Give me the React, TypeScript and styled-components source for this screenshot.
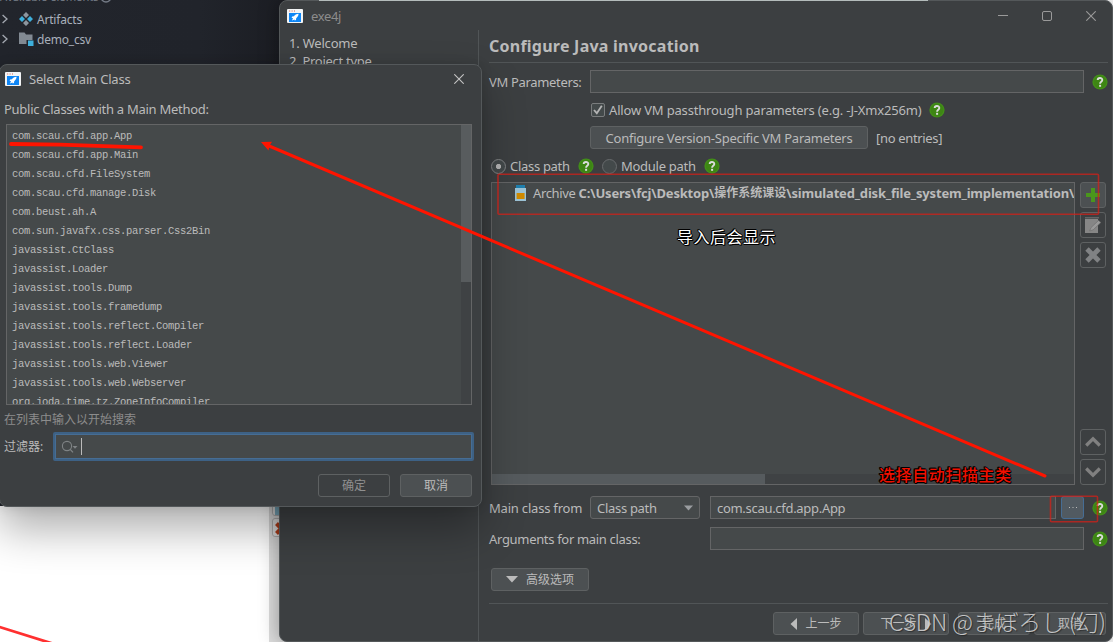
import React from "react";
import styled, { createGlobalStyle, css } from "styled-components";

const Global = createGlobalStyle`
  * { box-sizing: border-box; }
  html, body { margin: 0; padding: 0; }
  body {
    width: 1113px; height: 642px; overflow: hidden; background: #fff;
    font-family: "Noto Sans", "Noto Sans CJK SC", sans-serif;
    font-size: 13px; color: #bbb;
  }
`;

const Desktop = styled.div`
  position: relative;
  width: 1113px;
  height: 642px;
  overflow: hidden;
  background: #fff;
`;

/* ---------- windows ---------- */
const Win = styled.section<{ $x: number; $y: number; $w: number; $h: number }>`
  position: absolute;
  left: ${(p) => p.$x}px;
  top: ${(p) => p.$y}px;
  width: ${(p) => p.$w}px;
  height: ${(p) => p.$h}px;
  display: flex;
  flex-direction: column;
  background: #3c3f41;
  border: 1px solid #54585a;
  border-radius: 8px;
`;
const WizardWin = styled(Win)`
  box-shadow: 0 0 20px rgba(0, 0, 0, 0.35);
`;
const DialogWin = styled(Win)`
  box-shadow: 0 22px 44px rgba(0, 0, 0, 0.32), 0 0 12px rgba(0, 0, 0, 0.12);
`;

const TitleBar = styled.header<{ $h: number; $pad: string }>`
  display: flex;
  align-items: center;
  height: ${(p) => p.$h}px;
  padding: ${(p) => p.$pad};
  flex: none;
`;

const Label = styled.span<{ $c?: string; $s?: number; $ls?: number; $b?: boolean }>`
  color: ${(p) => p.$c ?? "#bbbbbb"};
  font-size: ${(p) => p.$s ?? 13}px;
  letter-spacing: ${(p) => p.$ls ?? 0}px;
  font-weight: ${(p) => (p.$b ? 700 : 400)};
  line-height: 18px;
  white-space: pre;
`;

const Spacer = styled.span<{ $w?: number }>`
  ${(p) => (p.$w === undefined ? css`flex: 1;` : css`flex: none; width: ${p.$w}px;`)}
`;

/* ---------- project tree ---------- */
const Tree = styled.aside`
  width: 300px;
  height: 506px;
  overflow: hidden;
  background: linear-gradient(90deg, #22252c 0, #21242b 200px, #1c1e24 279px);
`;
const TreeHead = styled.div`
  height: 9px;
  overflow: hidden;
  color: #747b86;
  font-size: 11.2px;
`;
const TreeHeadInner = styled.div`
  display: flex;
  align-items: center;
  gap: 1px;
  height: 16px;
  margin-top: -12px;
  white-space: pre;
`;
const TreeRow = styled.div`
  display: flex;
  align-items: center;
  height: 20px;
  color: #a9b0bb;
  font-size: 12px;
  letter-spacing: -0.2px;
`;

/* ---------- editor strip beneath the windows ---------- */
const Strip = styled.div`
  position: absolute;
  left: 269px;
  top: 500px;
  width: 30px;
  height: 142px;
  padding: 0 0 0 3px;
  display: flex;
  flex-direction: column;
  gap: 2px;
  background: #dcdcdc;
`;
const StripButton = styled.div<{ $h: number }>`
  width: 22px;
  height: ${(p) => p.$h}px;
  padding: 2px;
  border: 1px solid #b4b4b4;
  border-radius: 3px;
  background: #e6e6e6;
  flex: none;
  overflow: hidden;
`;
const TopEdge = styled.div`
  position: absolute;
  left: 319px;
  top: 0;
  width: 609px;
  height: 1px;
  background: #b4bcbb;
`;

/* ---------- wizard ---------- */
const Body = styled.div`
  flex: 1;
  display: flex;
  min-height: 0;
`;
const Steps = styled.nav`
  width: 199px;
  border-right: 1px solid #515557;
  padding: 4px 0 0 9px;
  display: flex;
  flex-direction: column;
`;
const Page = styled.main`
  flex: 1;
  display: flex;
  flex-direction: column;
  padding-left: 10px;
`;
const Row = styled.div<{ $h: number; $mt?: number; $pl?: number }>`
  display: flex;
  align-items: center;
  flex: none;
  height: ${(p) => p.$h}px;
  margin-top: ${(p) => p.$mt ?? 0}px;
  padding-left: ${(p) => p.$pl ?? 0}px;
`;
const Cell = styled.div<{ $w: number }>`
  width: ${(p) => p.$w}px;
  flex: none;
  display: flex;
`;
const Rule = styled.hr<{ $mt?: number }>`
  width: 619px;
  height: 1px;
  margin: ${(p) => p.$mt ?? 0}px 0 0;
  border: 0;
  background: #515557;
  flex: none;
`;
const Field = styled.div<{ $w: number }>`
  width: ${(p) => p.$w}px;
  height: 23px;
  flex: none;
  display: flex;
  align-items: center;
  padding: 0 7px 0 6px;
  background: #45494a;
  border: 1px solid #646566;
`;
const Button = styled.button<{ $w: number; $off?: boolean }>`
  width: ${(p) => p.$w}px;
  height: 23px;
  flex: none;
  display: flex;
  align-items: center;
  justify-content: center;
  gap: 8px;
  padding: 0;
  font-family: inherit;
  border: 1px solid #5e6162;
  border-radius: 3px;
  background: ${(p) => (p.$off ? "#3c3f41" : "#4c5052")};
`;
const Combo = styled(Button)`
  justify-content: space-between;
  padding: 0 6px;
  background: #45494a;
  border-color: #646566;
`;
const Browse = styled(Button)`
  background: #515a61;
  border-color: #466d94;
`;
const Check = styled.span`
  width: 14px;
  height: 14px;
  display: flex;
  align-items: center;
  justify-content: center;
  border: 1px solid #7a7d7e;
  border-radius: 2px;
  background: #43494a;
  flex: none;
`;
const Radio = styled.span<{ $on?: boolean }>`
  width: 15px;
  height: 15px;
  border-radius: 50%;
  border: 1px solid ${(p) => (p.$on ? "#808384" : "#686b6d")};
  flex: none;
  background: ${(p) =>
    p.$on ? "radial-gradient(circle, #b4b4b4 0 2.2px, #43494a 3px)" : "#43494a"};
`;
const PathArea = styled.div`
  display: flex;
  gap: 5px;
  height: 303px;
  margin: 8px 0 0 2px;
  flex: none;
`;
const PathList = styled.div`
  width: 584px;
  display: flex;
  flex-direction: column;
  justify-content: space-between;
  background: #45494a;
  border: 1px solid #646566;
  overflow: hidden;
`;
const PathEntry = styled.div`
  display: flex;
  align-items: center;
  height: 19px;
  padding-left: 22px;
  width: 582px;
  overflow: hidden;
`;
const HTrack = styled.div`
  height: 10px;
  background: #3f4244;
`;
const HThumb = styled.div`
  width: 273px;
  height: 10px;
  background: #565b5e;
`;
const Tools = styled.div`
  display: flex;
  flex-direction: column;
  gap: 4px;
`;
const Tool = styled.button<{ $off?: boolean }>`
  width: 26px;
  height: 26px;
  padding: 0;
  display: flex;
  align-items: center;
  justify-content: center;
  border: 1px solid #5e6162;
  border-radius: 3px;
  background: ${(p) => (p.$off ? "#3c3f41" : "#4c5052")};
`;
const Footer = styled.div`
  display: flex;
  margin-top: 8px;
  padding-left: 284px;
`;

/* ---------- dialog ---------- */
const ClassList = styled.div`
  display: flex;
  width: 466px;
  height: 281px;
  margin: 6px 0 0 6px;
  flex: none;
  background: #45494a;
  border: 1px solid #646566;
  overflow: hidden;
`;
const Classes = styled.ul`
  flex: 1;
  list-style: none;
  margin: 0;
  padding: 2px 0 0 5px;
`;
const ClassItem = styled.li`
  height: 19px;
  line-height: 19px;
  font-family: "Liberation Mono", monospace;
  font-size: 10.5px;
  letter-spacing: -0.3px;
  color: #bbb;
  white-space: pre;
`;
const VTrack = styled.div`
  width: 10px;
  background: #3f4244;
`;
const VThumb = styled.div`
  height: 157px;
  background: #585c5e;
`;
const Filter = styled.div`
  width: 421px;
  height: 29px;
  display: flex;
  align-items: center;
  padding-left: 6px;
  border: 2px solid #3d6185;
  box-shadow: inset 0 0 0 1px #466d94;
  border-radius: 2px;
  background: #45494a;
`;
const Caret = styled.span`
  width: 1px;
  height: 17px;
  margin-left: 3px;
  background: #bbb;
`;

/* ---------- annotations ---------- */
const Marks = styled.svg`
  position: absolute;
  inset: 0;
  pointer-events: none;
`;
const Note = styled.div<{ $x: number; $y: number; $c: string; $ls: number; $b?: boolean }>`
  position: absolute;
  left: ${(p) => p.$x}px;
  top: ${(p) => p.$y}px;
  font: ${(p) => (p.$b ? 500 : 400)} 16px/22px "Noto Sans CJK SC", sans-serif;
  letter-spacing: ${(p) => p.$ls}px;
  color: ${(p) => p.$c};
  white-space: pre;
  text-shadow: 1px 0 #000, -1px 0 #000, 0 1px #000, 0 -1px #000, 1px 1px #000, -1px -1px #000;
`;
const Watermark = styled.div`
  position: absolute;
  left: 889px;
  top: 604px;
  font: 300 23px/34px "Noto Sans CJK JP", sans-serif;
  letter-spacing: -0.2px;
  color: rgba(214, 214, 214, 0.88);
  white-space: pre;
  text-shadow: 1px 1px 1px rgba(0, 0, 0, 0.4);
`;

const AppIcon = () => (
  <svg width="16" height="14" viewBox="0 0 16 14">
    <rect width="16" height="14" rx="1" fill="#f2f4f5" />
    <rect x="2" y="4" width="12" height="9" fill="#0f86f5" />
    <path d="M2.2 2h1M4.6 2h1M7 2h1" stroke="#d9634f" strokeWidth="1" />
    <path d="M11.6 4.8 C9.4 5 7.8 6 7 7.3 L5.2 7.6 4.6 9 6 9 5 11.6 7.6 10.4 7.7 11.6 9 11 9.2 9.2 C10.6 8.3 11.4 6.8 11.6 4.8Z" fill="#fff" />
  </svg>
);

const Help = () => (
  <svg width="16" height="16" viewBox="0 0 16 16">
    <circle cx="8" cy="8" r="7.6" fill="#43901a" />
    <circle cx="8" cy="8" r="6.4" fill="#3e8614" />
    <path d="M5.7 6.1 C5.7 3.4 10.3 3.4 10.3 6 C10.3 7.8 8.1 7.8 8.1 9.7" fill="none" stroke="#dcdcdc" strokeWidth="1.9" />
    <rect x="7.1" y="10.8" width="2" height="2" fill="#dcdcdc" />
  </svg>
);

const Cross = ({ c, s = 10 }: { c: string; s?: number }) => (
  <svg width={s} height={s} viewBox="0 0 10 10">
    <path d="M0.3 0.3 9.7 9.7M9.7 0.3 0.3 9.7" stroke={c} strokeWidth="1.1" />
  </svg>
);

const Chevron = () => (
  <svg width="8" height="10" viewBox="0 0 8 10">
    <path d="M2.6 1 7 5 2.6 9" fill="none" stroke="#a4a9b1" strokeWidth="1.3" />
  </svg>
);

const classes = [
  "com.scau.cfd.app.App",
  "com.scau.cfd.app.Main",
  "com.scau.cfd.FileSystem",
  "com.scau.cfd.manage.Disk",
  "com.beust.ah.A",
  "com.sun.javafx.css.parser.Css2Bin",
  "javassist.CtClass",
  "javassist.Loader",
  "javassist.tools.Dump",
  "javassist.tools.framedump",
  "javassist.tools.reflect.Compiler",
  "javassist.tools.reflect.Loader",
  "javassist.tools.web.Viewer",
  "javassist.tools.web.Webserver",
  "org.joda.time.tz.ZoneInfoCompiler",
];

const ProjectTree = () => (
  <Tree>
    <TreeHead>
      <TreeHeadInner>
        Available elements
        <svg width="12" height="14" viewBox="0 0 12 14">
          <circle cx="6" cy="8" r="5" fill="none" stroke="#747b86" strokeWidth="1.3" />
        </svg>
      </TreeHeadInner>
    </TreeHead>
    <TreeRow>
      <Chevron />
      <Spacer $w={11} />
      <svg width="14" height="14" viewBox="0 0 14 14">
        <path d="M7 0 10 3 7 6 4 3Z M7 8 10 11 7 14 4 11Z" fill="#8d969f" />
        <path d="M3 4 6 7 3 10 0 7Z M11 4 14 7 11 10 8 7Z" fill="#3fb0dc" />
      </svg>
      <Spacer $w={4} />
      Artifacts
    </TreeRow>
    <TreeRow>
      <Chevron />
      <Spacer $w={10} />
      <svg width="16" height="14" viewBox="0 0 16 14">
        <path d="M1 0.5h5.5l1.5 2h6.5v5.5h-6v4H1z" fill="#828a93" />
        <rect x="10" y="8.5" width="5.5" height="5.5" fill="#3fb0dc" />
      </svg>
      <Spacer $w={3} />
      demo_csv
    </TreeRow>
  </Tree>
);

const Wizard = () => (
  <WizardWin $x={279} $y={0} $w={834} $h={642}>
    <TitleBar $h={29} $pad="0 16px 0 7px">
      <AppIcon />
      <Spacer $w={8} />
      <Label $c="#8c8c8c" $ls={-0.35}>exe4j</Label>
      <Spacer />
      <svg width="10" height="10" viewBox="0 0 10 10"><path d="M0 4.5H10" stroke="#9a9a9a" /></svg>
      <Spacer $w={34} />
      <svg width="10" height="10" viewBox="0 0 10 10">
        <rect x="0.5" y="0.5" width="9" height="9" rx="1.5" fill="none" stroke="#9a9a9a" />
      </svg>
      <Spacer $w={34} />
      <Cross c="#9a9a9a" />
    </TitleBar>
    <Body>
      <Steps>
        <Label $ls={-0.2}>1. Welcome</Label>
        <Label $ls={-0.28}>2. Project type</Label>
      </Steps>
      <Page>
        <Row $h={32}><Label $s={16} $ls={0.24} $b>Configure Java invocation</Label></Row>
        <Rule />
        <Row $h={23} $mt={7}>
          <Cell $w={101}><Label $ls={-0.33}>VM Parameters:</Label></Cell>
          <Field $w={494} />
          <Spacer $w={8} />
          <Help />
        </Row>
        <Row $h={16} $mt={9} $pl={102}>
          <Check>
            <svg width="12" height="12" viewBox="0 0 12 12">
              <path d="M2 6 4.8 9.2 9.8 1.8" fill="none" stroke="#b4b4b4" strokeWidth="1.8" />
            </svg>
          </Check>
          <Spacer $w={4} />
          <Cell $w={320}><Label $ls={-0.17}>Allow VM passthrough parameters (e.g. -J-Xmx256m)</Label></Cell>
          <Help />
        </Row>
        <Row $h={23} $mt={8} $pl={101}>
          <Button $w={278}><Label $ls={-0.25}>Configure Version-Specific VM Parameters</Label></Button>
          <Spacer $w={8} />
          <Label $ls={-0.33}>[no entries]</Label>
        </Row>
        <Row $h={16} $mt={9} $pl={2}>
          <Radio $on />
          <Spacer $w={4} />
          <Cell $w={68}><Label $ls={-0.3}>Class path</Label></Cell>
          <Help />
          <Spacer $w={8} />
          <Radio />
          <Spacer $w={4} />
          <Cell $w={83}><Label $ls={-0.27}>Module path</Label></Cell>
          <Help />
        </Row>
        <PathArea>
          <PathList>
            <PathEntry>
              <Cell $w={14}>
                <svg width="14" height="16" viewBox="0 0 14 16">
                  <path d="M2 0h9v3H2z" fill="#1f7fae" />
                  <path d="M1 3h11v13H1z" fill="#9cc3d6" />
                  <path d="M2.6 8h8v6h-8z" fill="#d08b00" />
                </svg>
              </Cell>
              <Spacer $w={5} />
              <Label $ls={-0.35}>Archive </Label>
              <Label $ls={-0.18} $b>C:\Users\fcj\Desktop\</Label>
              <Label $s={12} $b>操作系统课设</Label>
              <Label $ls={-0.18} $b>\simulated_disk_file_system_implementation\o</Label>
            </PathEntry>
            <HTrack><HThumb /></HTrack>
          </PathList>
          <Tools>
            <Tool>
              <svg width="14" height="14" viewBox="0 0 14 14">
                <path d="M5 0h4v5h5v4H9v5H5V9H0V5h5z" fill="#4a961c" />
              </svg>
            </Tool>
            <Tool $off>
              <svg width="16" height="16" viewBox="0 0 16 16">
                <path d="M0 2h13v14H0z" fill="#868686" />
                <path d="M0.5 0.8h13" stroke="#8b8b8b" strokeWidth="1.4" strokeDasharray="1 1" />
                <path d="M4.6 14 6 10.6 13.6 3.4 15.8 5.6 8.2 12.8Z" fill="#999" stroke="#6f6f6f" strokeWidth="0.7" />
              </svg>
            </Tool>
            <Tool $off>
              <svg width="16" height="16" viewBox="0 0 16 16">
                <path d="M2 2 14 14M14 2 2 14" stroke="#808284" strokeWidth="4.8" />
              </svg>
            </Tool>
            <Spacer />
            <Tool $off>
              <svg width="16" height="16" viewBox="0 0 16 16">
                <path d="M1.2 11.5 8 4.8 14.8 11.5" fill="none" stroke="#808080" strokeWidth="3.2" />
              </svg>
            </Tool>
            <Tool $off>
              <svg width="16" height="16" viewBox="0 0 16 16">
                <path d="M1.2 4.5 8 11.2 14.8 4.5" fill="none" stroke="#808080" strokeWidth="3.2" />
              </svg>
            </Tool>
          </Tools>
        </PathArea>
        <Row $h={23} $mt={11}>
          <Cell $w={101}><Label $ls={-0.2}>Main class from</Label></Cell>
          <Combo $w={110}>
            <Label $ls={-0.3}>Class path</Label>
            <svg width="9" height="6" viewBox="0 0 9 6"><path d="M0 0.5h9L4.5 5.5z" fill="#9a9da0" /></svg>
          </Combo>
          <Spacer $w={10} />
          <Field $w={346}><Label $ls={-0.3}>com.scau.cfd.app.App</Label></Field>
          <Spacer $w={5} />
          <Browse $w={23}>
            <svg width="8" height="2" viewBox="0 0 8 2"><path d="M0 0.5h1M3.5 0.5h1M7 0.5h1" stroke="#bbb" /></svg>
          </Browse>
          <Spacer $w={8} />
          <Help />
        </Row>
        <Row $h={23} $mt={8}>
          <Cell $w={221}><Label $ls={-0.32}>Arguments for main class:</Label></Cell>
          <Field $w={374} />
          <Spacer $w={8} />
          <Help />
        </Row>
        <Row $h={23} $mt={18} $pl={2}>
          <Button $w={98}>
            <svg width="12" height="7" viewBox="0 0 12 7"><path d="M0 0h12L6 6.5z" fill="#bbb" /></svg>
            <Label $s={12}>高级选项</Label>
          </Button>
        </Row>
        <Rule $mt={12} />
        <Footer>
          <Button $w={86}>
            <svg width="7" height="12" viewBox="0 0 7 12"><path d="M7 0v12L0.5 6z" fill="#bbb" /></svg>
            <Label $s={12}>上一步</Label>
          </Button>
          <Spacer $w={4} />
          <Button $w={86}>
            <Label $s={12}>下一步</Label>
            <svg width="7" height="12" viewBox="0 0 7 12"><path d="M0 0v12L6.5 6z" fill="#bbb" /></svg>
          </Button>
          <Spacer $w={9} />
          <Button $w={72}><Label $s={12}>完成</Label></Button>
          <Spacer $w={4} />
          <Button $w={72}><Label $s={12}>取消</Label></Button>
        </Footer>
      </Page>
    </Body>
  </WizardWin>
);

const ClassDialog = () => (
  <DialogWin $x={-1} $y={64} $w={483} $h={443}>
    <TitleBar $h={28} $pad="0 17px 0 5px">
      <AppIcon />
      <Spacer $w={8} />
      <Label $ls={-0.18}>Select Main Class</Label>
      <Spacer />
      <Cross c="#c4c4c4" s={10} />
    </TitleBar>
    <Row $h={18} $mt={7} $pl={4}><Label $ls={-0.27}>Public Classes with a Main Method:</Label></Row>
    <ClassList>
      <Classes>
        {classes.map((c) => <ClassItem key={c}>{c}</ClassItem>)}
      </Classes>
      <VTrack><VThumb /></VTrack>
    </ClassList>
    <Row $h={18} $mt={6} $pl={4}><Label $s={12} $c="#8c8c8c">在列表中输入以开始搜索</Label></Row>
    <Row $h={29} $mt={3} $pl={4}>
      <Cell $w={49}><Label $s={12}>过滤器:</Label></Cell>
      <Filter>
        <svg width="17" height="14" viewBox="0 0 17 14">
          <circle cx="6" cy="6" r="4.6" fill="none" stroke="#7f8385" strokeWidth="1.1" />
          <path d="M9.2 9.4 12 12.4" stroke="#7f8385" strokeWidth="1.3" />
          <path d="M11.5 6h5L14 8.8z" fill="#7f8385" />
        </svg>
        <Caret />
      </Filter>
    </Row>
    <Row $h={23} $mt={13} $pl={318}>
      <Button $w={72} $off><Label $s={12} $c="#909090">确定</Label></Button>
      <Spacer $w={10} />
      <Button $w={72}><Label $s={12}>取消</Label></Button>
    </Row>
  </DialogWin>
);

export default function App() {
  return (
    <>
      <Global />
      <Desktop>
        <ProjectTree />
        <Strip>
          <StripButton $h={16}>
            <svg width="16" height="12" viewBox="0 0 16 12"><rect width="16" height="12" fill="#7fb0c4" /></svg>
          </StripButton>
          <StripButton $h={19}>
            <svg width="14" height="13" viewBox="0 0 14 13">
              <path d="M1.5 1.5 11 11.5M11 1.5 1.5 11.5" stroke="#b8401c" strokeWidth="4" />
            </svg>
          </StripButton>
        </Strip>
        <Wizard />
        <TopEdge />
        <ClassDialog />
        <Marks width="1113" height="642" viewBox="0 0 1113 642">
          <g fill="none" stroke="#d81e16" strokeOpacity="0.72" strokeWidth="1.6">
            <rect x="498" y="174.3" width="600.5" height="40" rx="1" />
            <rect x="1050.5" y="496.3" width="47" height="25.5" rx="1" />
          </g>
          <g fill="none" stroke="#ff1400" strokeLinecap="round">
            <path d="M1045 476 268 145.5" strokeWidth="3" />
            <path d="M11 144 60 144.6 141 147.3" strokeWidth="3.8" />
            <path d="M-2 626.5 54 644" stroke="#ff3030" strokeWidth="2.8" />
          </g>
          <path d="M261 142 272 141.8 269.5 145.8 268.5 150.5Z" fill="#ff1400" />
        </Marks>
        <Note $x={677} $y={225} $c="#fff" $ls={0.5}>导入后会显示</Note>
        <Note $x={879} $y={463} $c="#f01000" $ls={0.6} $b>选择自动扫描主类</Note>
        <Watermark>CSDN @まぼろし (幻)</Watermark>
      </Desktop>
    </>
  );
}
